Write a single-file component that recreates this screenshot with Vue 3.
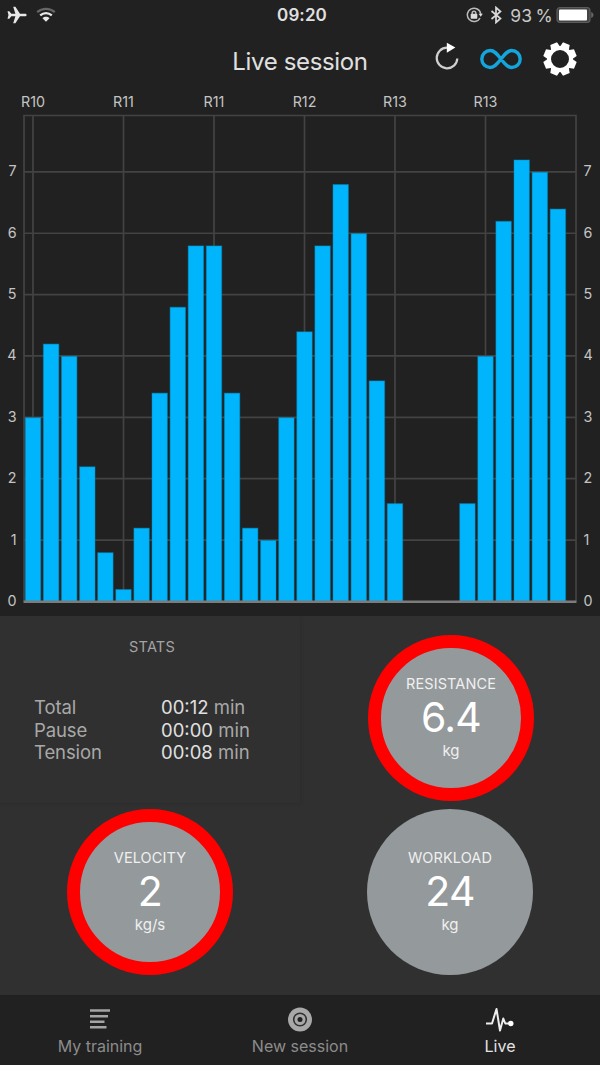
<template>
  <div class="screen">
    <header class="status">
      <div class="status__side">
        <svg class="plane" width="20" height="18" viewBox="0 0 20 18">
          <path d="M19.600 9c0-.9-.7-1.300-1.600-1.300h-5L8.400.8H6.200l2.200 6.900H4.300L2.300 5.300H.5L1.500 9l-1 3.700h1.800l2-2.400h4.100L6.200 17.200h2.200l4.600-6.900h5c.9 0 1.600-.4 1.600-1.300z" />
        </svg>
        <svg class="wifi" width="20" height="16" viewBox="0 0 20 16">
          <path class="wifi__dim" d="M1.200 5.200C6.200.8 13.800.8 18.800 5.200" />
          <path d="M4.200 8.400c3.300-3 8.300-3 11.600 0" />
          <path class="wifi__dot" d="M6.500 11.200c2-1.900 5-1.900 7 0L10 14.800z" />
        </svg>
      </div>
      <div class="status__time">09:20</div>
      <div class="status__side status__side--right">
        <svg class="lock" width="17" height="16" viewBox="0 0 17 16">
          <path class="lock__ring" d="M14 11a6.700 6.700 0 1 1 .7-4" />
          <path d="M12.600 6.700h4.200l-2.100 3z" />
          <rect x="4.700" y="6.800" width="6.600" height="4.900" rx=".6" />
          <path class="lock__hook" d="M6.200 7.200V6a1.800 1.800 0 0 1 3.600 0v1.200" />
        </svg>
        <svg class="bluetooth" width="12" height="18" viewBox="0 0 12 18">
          <path d="M1.500 5l9 7.500L6 16.500v-15l4.500 4-9 7.500" />
        </svg>
        <span class="status__pct">93&#8201;%</span>
        <svg class="battery" width="38" height="18" viewBox="0 0 38 18">
          <rect class="battery__case" x="1" y="1.500" width="33" height="15" rx="3" />
          <rect class="battery__fill" x="3" y="3.500" width="28" height="11" rx="1" />
          <path class="battery__tip" d="M35.200 6c3 .8 3 5.200 0 6z" />
        </svg>
      </div>
    </header>

    <nav class="navbar">
      <h1 class="navbar__title">Live session</h1>
      <div class="navbar__actions">
        <svg width="26" height="28" viewBox="0 0 26 28">
          <path class="reload" d="M13 4.700A10.300 10.300 0 1 0 23.300 15.500" />
          <path class="reload__arrow" d="M12.800-.2l8.600 4.800-8.600 5.200z" />
        </svg>
        <svg class="infinity" width="42" height="22" viewBox="0 0 42 22">
          <path d="M21 11C16.500 5.200 14 2.500 10.300 2.500a8.500 8.500 0 0 0 0 17C14 19.500 16.500 16.800 21 11S28 2.500 31.700 2.500a8.500 8.500 0 0 1 0 17C28 19.500 25.500 16.800 21 11z" />
        </svg>
        <svg class="gear" width="34" height="34" viewBox="-17 -17 34 34">
          <path
            v-for="n in 8"
            :key="n"
            d="M-5-10.500L-3.600-16.600h7.200L5-10.500z"
            :transform="`rotate(${n * 45 - 22.500})`"
          />
          <circle r="11" />
        </svg>
      </div>
    </nav>

    <svg class="chart" width="600" height="526" viewBox="0 90 600 526">
      <g class="chart__grid">
        <path v-for="t in ticks" :key="t" :d="`M24 ${yOf(t)}H576`" />
        <path v-for="c in columns" :key="c.x" :d="`M${c.x} 115.500V601`" />
        <path d="M24 601V115.500H576V601" />
      </g>
      <g class="chart__labels">
        <text v-for="c in columns" :key="c.x" :x="c.x" y="107" text-anchor="middle">{{ c.label }}</text>
        <template v-for="t in [0, ...ticks]" :key="t">
          <text x="16.500" :y="yOf(t) + 4.500" text-anchor="end">{{ t }}</text>
          <text x="583.500" :y="yOf(t) + 4.500">{{ t }}</text>
        </template>
      </g>
      <rect
        v-for="bar in bars"
        :key="bar.x"
        class="chart__bar"
        :x="bar.x"
        :y="bar.y"
        width="15.400"
        :height="601.500 - bar.y"
      />
      <path class="chart__axis" d="M23.500 601.700H576.500" />
    </svg>

    <main class="panel">
      <section class="stats">
        <h2 class="stats__title">STATS</h2>
        <dl class="stats__list">
          <div v-for="s in stats" :key="s.name" class="stats__row">
            <dt>{{ s.name }}</dt>
            <dd><b>{{ s.time }}</b> min</dd>
          </div>
        </dl>
      </section>

      <section v-for="g in gauges" :key="g.name" class="cell">
        <div class="gauge" :class="{ 'gauge--alert': g.alert }">
          <span class="gauge__name">{{ g.name }}</span>
          <span class="gauge__value">{{ g.value }}</span>
          <span class="gauge__unit">{{ g.unit }}</span>
        </div>
      </section>
    </main>

    <footer class="tabs">
      <div class="tab">
        <svg width="30" height="28" viewBox="0 0 30 28">
          <path class="tab__lines" d="M5 4.500h20M5 10.200h18M5 15.800h14.500M5 21.300h16.500" />
        </svg>
        My training
      </div>
      <div class="tab">
        <svg width="30" height="28" viewBox="0 0 30 28">
          <circle class="tab__disc" cx="15" cy="13.500" r="12" />
          <circle class="tab__ring" cx="15" cy="13.500" r="6.300" />
          <circle class="tab__core" cx="15" cy="13.500" r="2.500" />
        </svg>
        New session
      </div>
      <div class="tab tab--active">
        <svg width="30" height="28" viewBox="0 0 30 28">
          <path class="tab__pulse" d="M1 17.500h6L11.500 3 15 24.500l3.300-12 2 5H25" />
          <circle class="tab__dot" cx="25.800" cy="17.500" r="2.700" />
        </svg>
        Live
      </div>
    </footer>
  </div>
</template>

<script setup>
import { computed } from 'vue'

const FIRST_X = 33
const STEP = 18.1
const UNIT = 61.36

const values = [
  3, 4.2, 4, 2.2, 0.8, 0.2, 1.2, 3.4, 4.8, 5.8,
  5.8, 3.4, 1.2, 1, 3, 4.4, 5.8, 6.8, 6, 3.6,
  1.6, 0, 0, 0, 1.6, 4, 6.2, 7.2, 7, 6.4,
]
const ticks = [1, 2, 3, 4, 5, 6, 7]

// one label every five bars
const columns = ['R10', 'R11', 'R11', 'R12', 'R13', 'R13'].map((label, i) => ({
  label,
  x: FIRST_X + i * 5 * STEP,
}))

const bars = computed(() =>
  values
    .map((v, i) => ({ v, x: FIRST_X + i * STEP - 7.7, y: yOf(v) + 0.4 }))
    .filter(b => b.v > 0)
)

const stats = [
  { name: 'Total', time: '00:12' },
  { name: 'Pause', time: '00:00' },
  { name: 'Tension', time: '00:08' },
]

const gauges = [
  { name: 'RESISTANCE', value: '6.4', unit: 'kg', alert: true },
  { name: 'VELOCITY', value: '2', unit: 'kg/s', alert: true },
  { name: 'WORKLOAD', value: '24', unit: 'kg', alert: false },
]

function yOf(v) {
  return 601.4 - v * UNIT
}
</script>

<style>
body { background: #212121; }
</style>

<style scoped>
.screen {
  width: 600px;
  height: 1065px;
  display: flex;
  flex-direction: column;
  overflow: hidden;
  background: #212121;
  color: #e0e0e0;
  font-family: Inter, 'Liberation Sans', sans-serif;
}
svg { display: block; flex: none; }

.status {
  height: 30px;
  display: grid;
  grid-template-columns: 1fr auto 1fr;
  align-items: center;
  padding: 0 6px 0 7px;
}
.status__side { display: flex; align-items: center; gap: 9px; }
.status__side--right { justify-content: flex-end; gap: 0; }
.status__time { font-size: 17px; font-weight: 600; letter-spacing: 0.1px; padding-left: 3px; }
.status__pct { font-size: 17.5px; letter-spacing: 0.2px; margin: 0 3px 0 8px; color: #c8c8c8; }
.plane { fill: #e8e8e8; }
.wifi { fill: none; stroke: #e8e8e8; stroke-width: 2.2; }
.wifi__dim { stroke: #666; }
.wifi__dot { fill: #e8e8e8; stroke: none; }
.lock { fill: #ddd; margin-right: 7px; }
.lock__ring, .lock__hook { fill: none; stroke: #bbb; stroke-width: 1.5; }
.bluetooth { fill: none; stroke: #d8d8d8; stroke-width: 1.7; }
.battery__case { fill: #444; stroke: #5c5c5c; stroke-width: 1.2; }
.battery__fill { fill: #fff; }
.battery__tip { fill: #666; }

.navbar {
  height: 60px;
  display: grid;
  grid-template-columns: 1fr auto 1fr;
  align-items: center;
}
.navbar__title {
  grid-column: 2;
  margin: 2px 0 0;
  font-size: 24px;
  font-weight: 400;
  letter-spacing: -0.35px;
}
.navbar__actions {
  display: flex;
  align-items: center;
  justify-content: flex-end;
  gap: 21px;
  padding-right: 23px;
  margin-top: -2px;
}
.navbar__actions > :first-child { margin-right: -1px; margin-top: -4px; overflow: visible; }
.reload { fill: none; stroke: #d0d0d0; stroke-width: 2.2; }
.reload__arrow { fill: #fff; }
.infinity { fill: none; stroke: #13a5dc; stroke-width: 3.4; }
.gear { fill: #fff; }
.gear circle { fill: #212121; stroke: #fff; stroke-width: 4; }

.chart__grid { fill: none; stroke: #434343; stroke-width: 1.7; }
.chart__labels { fill: #c4c4c4; font-size: 14.3px; }
.chart__bar { fill: #00b5fb; stroke: rgba(0, 140, 195, 0.4); stroke-width: 1.2; }
.chart__axis { stroke: #7c7c7c; stroke-width: 2.4; }

.panel {
  height: 379px;
  box-sizing: border-box;
  display: grid;
  grid-template-columns: 1fr 1fr;
  grid-template-rows: 187px 175px;
  background: #303030;
}
.stats {
  display: flex;
  flex-direction: column;
  box-shadow: 0 0 4px rgba(0, 0, 0, 0.16);
  clip-path: inset(0 -6px -6px 0);
}
.stats__title {
  margin: 22px 0 0;
  padding-left: 4px;
  text-align: center;
  font-size: 14.5px;
  line-height: 18px;
  font-weight: 400;
  letter-spacing: 0.2px;
  color: #a3a3a3;
}
.stats__list { margin: 40px 0 0 34px; font-size: 18.5px; line-height: 22.7px; color: #a8a8a8; }
.stats__row { display: grid; grid-template-columns: 127px 1fr; }
.stats__row dt { letter-spacing: -0.1px; }
.stats__row dd { margin: 0; }
.stats__row b { font-weight: 400; color: #e0e0e0; }

.cell { display: flex; align-items: flex-end; justify-content: center; }
.gauge {
  width: 166px;
  height: 166px;
  box-sizing: border-box;
  display: flex;
  flex-direction: column;
  align-items: center;
  justify-content: center;
  border-radius: 50%;
  background: #94999b;
  color: #f0f0f0;
}
.gauge--alert { border: 13px solid #f00; }
.cell:nth-child(2) { padding: 0 0 2px 2px; }
.cell:nth-child(n + 3) { align-items: center; padding-top: 3px; }
.gauge__name { font-size: 14.5px; line-height: 18px; letter-spacing: 0.1px; }
.gauge__value { font-size: 41px; line-height: 48px; letter-spacing: -0.7px; color: #fff; }
.gauge__unit { font-size: 15px; line-height: 20px; }

.tabs {
  height: 70px;
  display: grid;
  grid-template-columns: repeat(3, 1fr);
  background: #212121;
}
.tab {
  display: flex;
  flex-direction: column;
  align-items: center;
  padding-top: 11px;
  font-size: 16px;
  line-height: 24px;
  color: #8c8c8c;
}
.tab--active { color: #e4e4e4; }
.tab__lines { stroke: #a4a4a4; stroke-width: 2.4; }
.tab__disc { fill: #a8a8a8; }
.tab__ring { fill: none; stroke: #303030; stroke-width: 1.6; }
.tab__core { fill: #212121; }
.tab__pulse { fill: none; stroke: #eee; stroke-width: 2; stroke-linejoin: round; }
.tab__dot { fill: #fff; }
</style>
